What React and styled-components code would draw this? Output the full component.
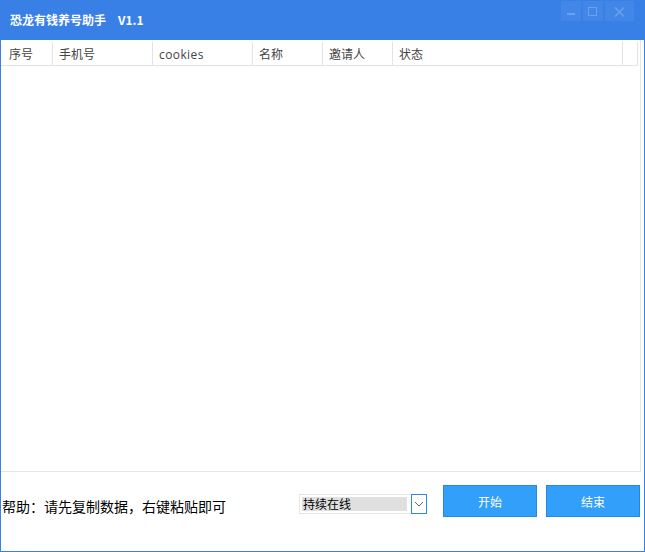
import React from 'react';
import styled, { createGlobalStyle } from 'styled-components';

const cjk = '"Noto Sans CJK SC", "Liberation Sans", sans-serif';
const headerFont = '"Open Sans", "Noto Sans CJK SC", sans-serif';

const GlobalStyle = createGlobalStyle`
  html, body {
    margin: 0;
    padding: 0;
    background: #fff;
  }
`;

const Window = styled.div`
  width: 645px;
  height: 552px;
  box-sizing: border-box;
  border: 1px solid #3980e6;
  border-top: none;
  display: flex;
  flex-direction: column;
  background: #fff;
  overflow: hidden;
`;

const TitleBar = styled.div`
  height: 40px;
  margin: 0 -1px;
  flex: none;
  box-sizing: border-box;
  background: #3980e6;
  display: flex;
  justify-content: space-between;
  align-items: flex-start;
  padding: 1px 11px 0 10px;
`;

const Title = styled.div`
  font-family: ${cjk};
  font-size: 12px;
  font-weight: 700;
  color: #fff;
  line-height: 38px;
  white-space: pre;
`;

const Version = styled.span`
  margin-left: 12px;
`;

const WinButtons = styled.div`
  display: flex;
  gap: 2px;
`;

const WinButton = styled.div`
  width: ${(p) => p.$w}px;
  height: 20px;
  background: #4287e8;
  display: flex;
  align-items: center;
  justify-content: center;
`;

const Table = styled.div`
  height: 432px;
  flex: none;
  margin-right: 3px;
  border-right: 1px solid #e6e6e6;
  border-bottom: 1px solid #e6e6e6;
  box-sizing: border-box;
`;

const HeaderRow = styled.div`
  height: 26px;
  display: flex;
  box-sizing: border-box;
  border-bottom: 1px solid #e3e3e3;
  margin-right: 2px;
  padding-top: 2px;
`;

const HeaderCell = styled.div`
  width: ${(p) => p.$w}px;
  flex: none;
  box-sizing: border-box;
  border-right: 1px solid #e3e3e3;
  padding-left: ${(p) => p.$pad}px;
  font-family: ${headerFont};
  font-size: 12px;
  letter-spacing: ${(p) => p.$spacing || 0}px;
  color: #444;
  line-height: 25px;
`;

const Footer = styled.div`
  flex: 1;
  display: flex;
  align-items: flex-start;
`;

const Help = styled.div`
  width: 297px;
  flex: none;
  margin: 24px 0 0 1px;
  font-family: ${cjk};
  font-size: 14px;
  line-height: 20px;
  color: #000;
  white-space: nowrap;
`;

const Select = styled.div`
  width: 128px;
  height: 20px;
  margin-top: 22px;
  flex: none;
  box-sizing: border-box;
  display: flex;
  border: 1px solid #e6e6e6;
  border-right: none;
`;

const SelectValue = styled.div`
  flex: 1;
  margin: 2px 4px 2px 2px;
  padding-left: 1px;
  background: #e0e0e0;
  font-family: ${cjk};
  font-size: 12px;
  line-height: 14px;
  color: #000;
`;

const SelectArrow = styled.div`
  width: 16px;
  flex: none;
  margin: -1px 0;
  border: 1px solid #2f88e6;
  box-sizing: border-box;
  display: flex;
  align-items: center;
  justify-content: center;
`;

const ActionButton = styled.button`
  width: 94px;
  height: 32px;
  margin: 13px 0 0 ${(p) => p.$gap}px;
  flex: none;
  padding: 0;
  box-sizing: border-box;
  border: 1px solid #2488e2;
  background: #329ffa;
  color: #fff;
  font-family: ${cjk};
  font-size: 12px;
`;

const columns = [
  { label: '序号', w: 52, pad: 8 },
  { label: '手机号', w: 100, pad: 6 },
  { label: 'cookies', w: 100, pad: 6, spacing: 0.4 },
  { label: '名称', w: 70, pad: 6 },
  { label: '邀请人', w: 70, pad: 6 },
  { label: '状态', w: 230, pad: 6 },
  { label: '', w: 15, pad: 0 },
];

export default function App() {
  return (
    <>
      <GlobalStyle />
      <Window>
        <TitleBar>
          <Title>恐龙有钱养号助手<Version>V1.1</Version></Title>
          <WinButtons>
            <WinButton $w={20}>
              <svg width="10" height="10" viewBox="0 0 10 10">
                <rect x="1" y="7" width="8" height="2" fill="#6aa0ee" />
              </svg>
            </WinButton>
            <WinButton $w={20}>
              <svg width="10" height="10" viewBox="0 0 10 10">
                <rect x="0.5" y="1.5" width="8" height="8" fill="none" stroke="#6aa0ee" />
              </svg>
            </WinButton>
            <WinButton $w={29}>
              <svg width="11" height="11" viewBox="0 0 11 11">
                <path d="M1 1.5 L10 10.5 M10 1.5 L1 10.5" stroke="#6aa0ee" strokeWidth="1.7" />
              </svg>
            </WinButton>
          </WinButtons>
        </TitleBar>
        <Table>
          <HeaderRow>
            {columns.map((c, i) => (
              <HeaderCell key={i} $w={c.w} $pad={c.pad} $spacing={c.spacing}>{c.label}</HeaderCell>
            ))}
          </HeaderRow>
        </Table>
        <Footer>
          <Help>帮助：请先复制数据，右键粘贴即可</Help>
          <Select>
            <SelectValue>持续在线</SelectValue>
            <SelectArrow>
              <svg width="10" height="6" viewBox="0 0 10 6">
                <path d="M1 1 L5 5 L9 1" fill="none" stroke="#666" strokeWidth="1" />
              </svg>
            </SelectArrow>
          </Select>
          <ActionButton $gap={16}>开始</ActionButton>
          <ActionButton $gap={9}>结束</ActionButton>
        </Footer>
      </Window>
    </>
  );
}
